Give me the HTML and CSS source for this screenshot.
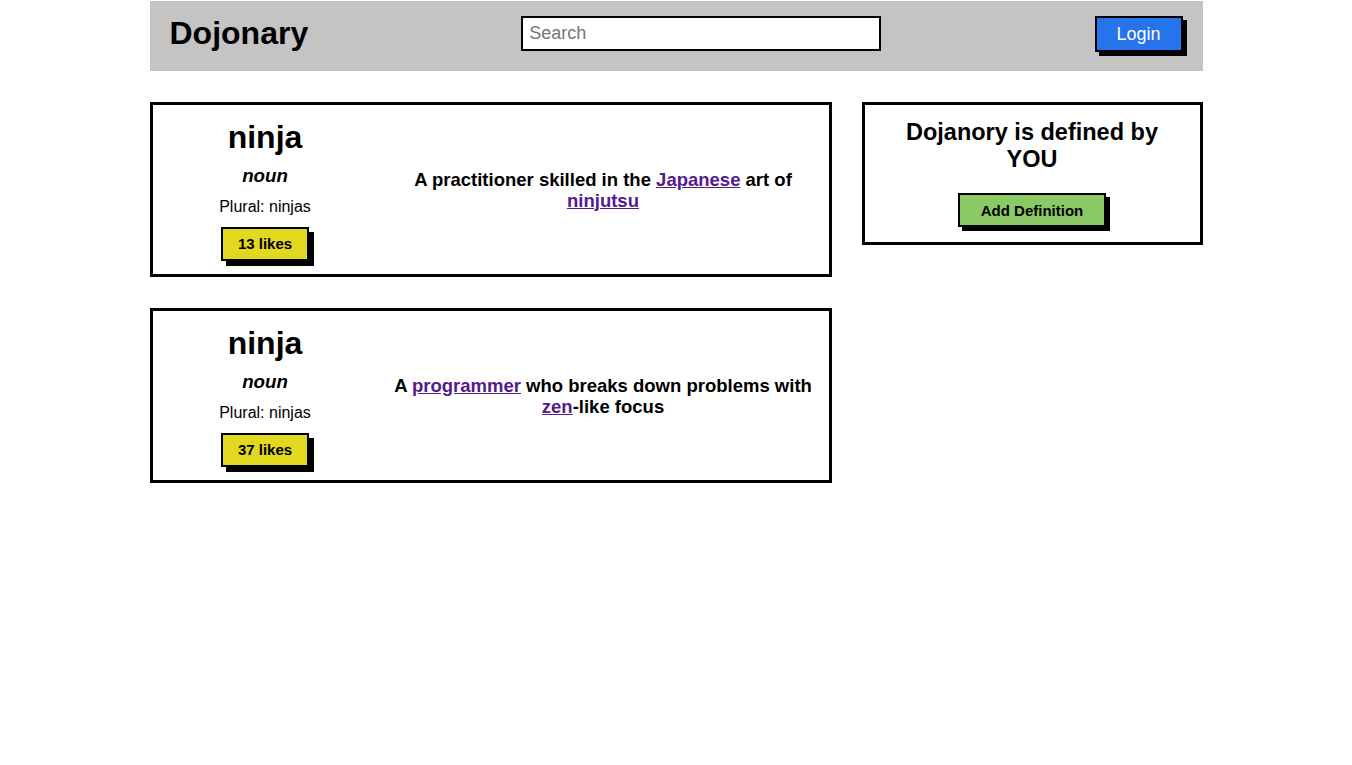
FILE: index.html
```html
<!DOCTYPE html>
<html>
<head>
  <title>Dojonary</title>
  <link rel="stylesheet" href="styles.css">
</head>
<body>
  <div class="page">
    <header class="top-bar">
      <h1 class="brand">Dojonary</h1>
      <input type="text" class="search" placeholder="Search">
      <button class="login-button">Login</button>
    </header>

    <div class="content">
      <div class="entries">
        <div class="card entry">
          <div class="word-info">
            <h1 class="word">ninja</h1>
            <h3 class="part">noun</h3>
            <p class="plural">Plural: ninjas</p>
            <button class="likes-button">13 likes</button>
          </div>
          <div class="definition">
            <h3>A practitioner skilled in the <a href="#">Japanese</a> art of <a href="#">ninjutsu</a></h3>
          </div>
        </div>

        <div class="card entry">
          <div class="word-info">
            <h1 class="word">ninja</h1>
            <h3 class="part">noun</h3>
            <p class="plural">Plural: ninjas</p>
            <button class="likes-button">37 likes</button>
          </div>
          <div class="definition">
            <h3>A <a href="#">programmer</a> who breaks down problems with <a href="#">zen</a>-like focus</h3>
          </div>
        </div>
      </div>

      <div class="sidebar">
        <div class="card promo">
          <h2>Dojanory is defined by YOU</h2>
          <button class="add-button">Add Definition</button>
        </div>
      </div>
    </div>
  </div>
</body>
</html>
```

FILE: styles.css
```css
body {
  margin: 0;
  font-family: "Liberation Sans", Arial, sans-serif;
  color: black;
}

.page {
  width: 1053px;
  margin: 0 auto;
  padding-top: 1px;
}

.top-bar {
  display: flex;
  align-items: center;
  justify-content: space-between;
  height: 70px;
  padding: 0 20px 5px;
  background: #c4c4c4;
  box-sizing: border-box;
}

.brand {
  margin: 0;
  font-size: 32px;
}

.search {
  width: 360px;
  height: 35px;
  box-sizing: border-box;
  border: 2px solid black;
  padding: 0 6px;
  font-size: 18px;
  font-family: "Liberation Sans", Arial, sans-serif;
}

.search::placeholder {
  color: #757575;
}

.login-button {
  width: 88px;
  height: 36px;
  background: #2674ec;
  color: white;
  font-size: 18px;
  font-family: "Liberation Sans", Arial, sans-serif;
  border: 2px solid black;
  box-shadow: 4px 4px 0 black;
  margin-top: 1px;
}

.content {
  display: grid;
  grid-template-columns: 2fr 1fr;
  gap: 30px;
  margin-top: 31px;
}

.entries {
  display: flex;
  flex-direction: column;
  gap: 31px;
}

.card {
  border: 3px solid black;
}

.entry {
  display: flex;
  align-items: center;
  height: 175px;
  box-sizing: border-box;
}

.word-info {
  width: 225px;
  flex-shrink: 0;
  display: flex;
  flex-direction: column;
  align-items: center;
}

.word {
  margin: 0 0 9px;
  font-size: 32px;
}

.part {
  margin: 0;
  font-size: 18.72px;
  font-style: italic;
}

.plural {
  margin: 11px 0 11px;
  font-size: 16px;
}

.likes-button {
  width: 88px;
  height: 34px;
  background: #e1d81f;
  border: 2px solid black;
  box-shadow: 5px 5px 0 black;
  font-size: 15px;
  font-weight: bold;
  font-family: "Liberation Sans", Arial, sans-serif;
  color: black;
}

.definition {
  flex: 1;
  padding: 0 12px;
  text-align: center;
}

.definition h3 {
  margin: 0;
  font-size: 18.5px;
  line-height: 21px;
}

.definition a {
  color: #551a8b;
}

.promo {
  display: flex;
  flex-direction: column;
  align-items: center;
  padding: 14px 20px 15px;
  text-align: center;
}

.promo h2 {
  margin: 0 0 20px;
  font-size: 23.5px;
  line-height: 27px;
}

.add-button {
  width: 148px;
  height: 34px;
  background: #8bc964;
  border: 2px solid black;
  box-shadow: 4px 4px 0 black;
  font-size: 15px;
  font-weight: bold;
  font-family: "Liberation Sans", Arial, sans-serif;
  color: black;
}
```
